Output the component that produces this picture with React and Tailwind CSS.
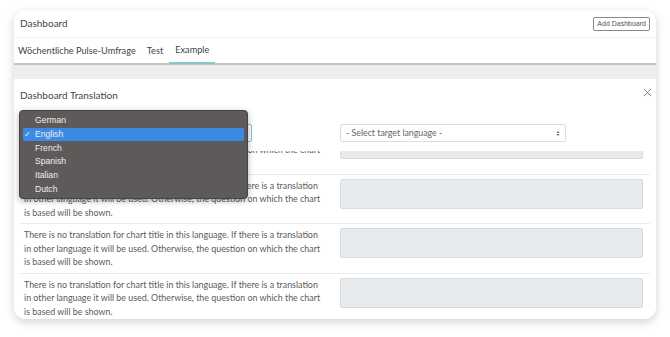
import React from "react";

const languages = ["German", "English", "French", "Spanish", "Italian", "Dutch"];
const note =
  "There is no translation for chart title in this language. If there is a translation in other language it will be used. Otherwise, the question on which the chart is based will be shown.";

const Row = ({ first }) => (
  <div className={`flex items-start pl-[4px] pr-[7px] py-[4px] ${first ? "" : "border-t border-[#ebebeb]"}`}>
    <p className="w-[302px] text-[8.9px] leading-[13.5px] text-[#5a5a5a]">{note}</p>
    <div className="ml-auto w-[303px] h-[30px] rounded-[2px] bg-[#e8ebee] border border-[#d8dbde]"></div>
  </div>
);

const App = () => {
  return (
    <div className="w-[670px] h-[337px] bg-white pt-[10px] pl-[14px]" style={{ fontFamily: "Lato, 'Open Sans', sans-serif" }}>
      <div className="w-[642px] h-[309px] rounded-[12px] overflow-hidden bg-white shadow-[0_3px_10px_rgba(0,0,0,0.18)] flex flex-col">
        {/* header */}
        <div className="h-[28px] flex items-center justify-between px-[6px] border-b border-[#f2f2f2] shrink-0">
          <span className="text-[10px] text-[#444]">Dashboard</span>
          <button className="h-[14px] px-[3px] border border-[#8a8a8a] rounded-[2px] text-[7px] leading-none text-[#555]" style={{ fontFamily: "'Liberation Sans', Arial, sans-serif" }}>
            Add Dashboard
          </button>
        </div>

        {/* tabs */}
        <div className="h-[27px] flex items-stretch pl-[4px] border-b-[2px] border-[#c4c4c4] shrink-0">
          <div className="flex items-center mr-[11px] text-[9.2px] text-[#444]">Wöchentliche Pulse-Umfrage</div>
          <div className="flex items-center mr-[6px] text-[9.2px] text-[#444]">Test</div>
          <div className="flex items-center px-[6px] text-[9.2px] text-[#444] border-b-[2px] border-[#8cc7c8] -mb-[1px]">Example</div>
        </div>

        <div className="h-[14px] bg-[#eeeeee] shrink-0"></div>

        {/* modal */}
        <div className="relative flex-1 flex flex-col min-h-0 bg-white">
          <div className="h-[32px] flex items-center justify-between px-[6px] shrink-0">
            <span className="text-[10px] text-[#444]">Dashboard Translation</span>
            <svg width="9" height="9" viewBox="0 0 10 10" className="-mr-[2px] -mt-[6px]">
              <path d="M1 1 L9 9 M9 1 L1 9" stroke="#777" strokeWidth="1" />
            </svg>
          </div>

          <div className="flex items-center px-[6px] mt-[13px] h-[18px] shrink-0">
            <div className="w-[232px] h-[18px] rounded-[2px] border border-[#85c9cb] bg-white"></div>
            <div className="ml-[88px] w-[226px] h-[18px] rounded-[2px] border border-[#dcdcdc] bg-white flex items-center justify-between px-[5px]">
              <span className="text-[8.8px] text-[#666]">- Select target language -</span>
              <svg width="4" height="7" viewBox="0 0 4 7">
                <path d="M0.5 3 L2 1 L3.5 3 Z M0.5 4 L2 6 L3.5 4 Z" fill="#666" />
              </svg>
            </div>
          </div>

          <div className="mt-[9px] flex-1 overflow-hidden px-[6px]">
            <div className="-mt-[26px]">
              <Row first />
              <Row />
              <Row />
              <Row />
            </div>
          </div>

          {/* open dropdown */}
          <div className="absolute left-[5px] top-[31px] w-[229px] h-[89px] rounded-[4px] bg-[#5f5a5a] border border-[#444] shadow-[0_2px_6px_rgba(0,0,0,0.3)] px-[3px] pt-[3px]" style={{ fontFamily: "'Liberation Sans', Arial, sans-serif" }}>
            {languages.map((lang) => (
              <div
                key={lang}
                className={`h-[13.7px] flex items-center rounded-[2px] text-[8.6px] text-[#eeeeee] ${lang === "English" ? "bg-[#3b8be4]" : ""}`}
              >
                <span className="w-[12px] pl-[1px] text-[8px]">{lang === "English" ? "✓" : ""}</span>
                {lang}
              </div>
            ))}
          </div>
        </div>
      </div>
    </div>
  );
};

export default App;
